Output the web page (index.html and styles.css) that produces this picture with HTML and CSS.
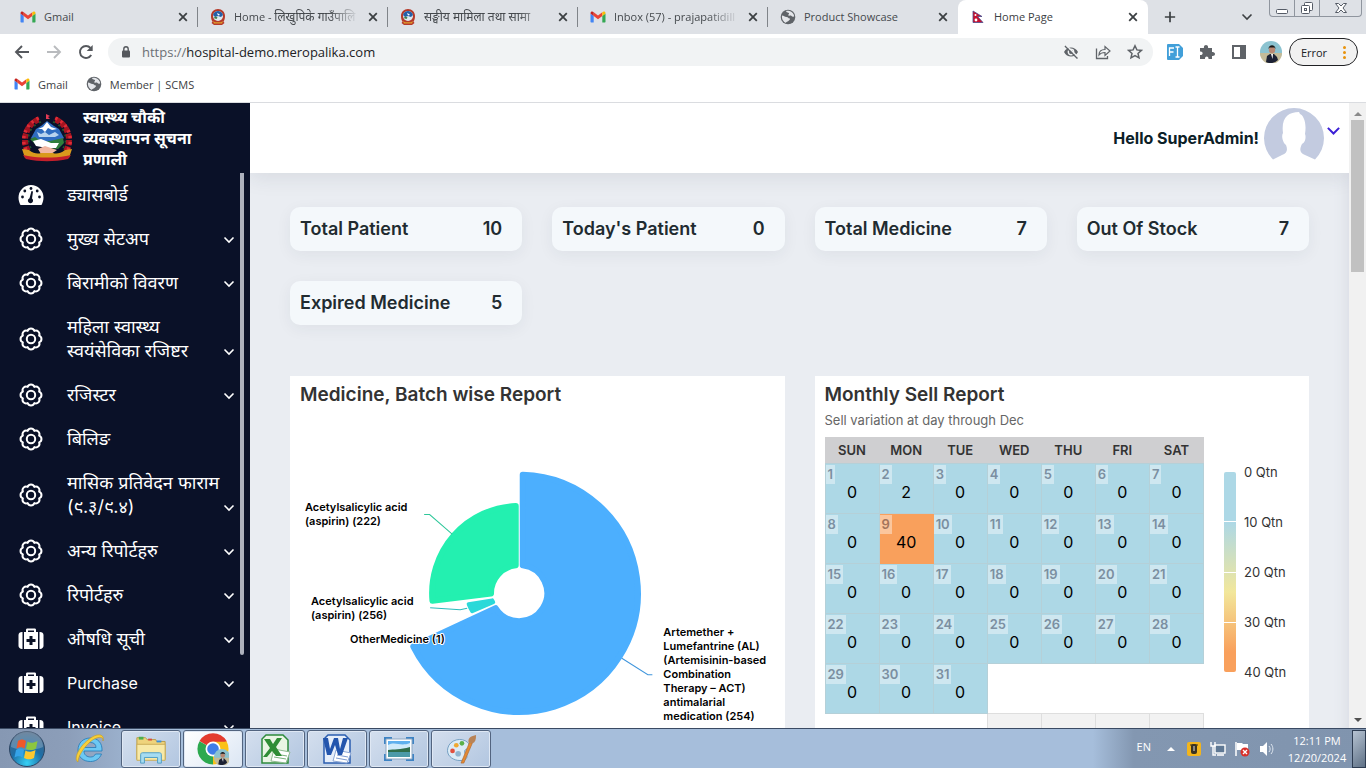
FILE: index.html
```html
<!DOCTYPE html>
<html lang="ne">
<head>
<meta charset="utf-8">
<title>Home Page</title>
<meta name="viewport" content="width=device-width, initial-scale=1">
<link rel="stylesheet" href="styles.css">
</head>
<body>
<svg class="sprite" aria-hidden="true">
  <symbol id="i-gmail" viewBox="0 0 16 16"><path fill="#4285f4" d="M1 13.500h2.700V7L0.500 4.500V13z"/><path fill="#34a853" d="M12.300 13.500H15l.5-.5V4.500L12.300 7z"/><path fill="#ea4335" d="M3.700 7V3.200L8 6.500l4.300-3.300V7L8 10.300z"/><path fill="#c5221f" d="M.5 4.500c0-2 1.800-2.500 3.200-1.300V7z"/><path fill="#fbbc04" d="M15.500 4.500c0-2-1.800-2.500-3.200-1.300V7z"/></symbol>
  <symbol id="i-globe" viewBox="0 0 16 16"><circle cx="8" cy="8" r="7.300" fill="#5f6368"/><path fill="#e4e6ea" d="M2 6.500c2 0 2.500 1.500 4.500 1.500S8 9.500 9.500 9.500 9 12 7.500 12.500 5.500 14 6 14C3.500 13 1.500 10 2 6.500zM6 2.200C7 4 8.500 3 9 4.200S7 6 8.500 6.500s2-.5 3 .5 1.500 1 2.700.2C14 5 12 2.500 9.500 2S6.500 2 6 2.200z"/></symbol>
  <symbol id="i-seal" viewBox="0 0 16 16"><path fill="#b53a2a" d="M8 0c4 0 7 3 7 7 0 3-.8 4.500-1.500 5.500l1 1.500L12 16H4l-2.500-2 1-1.500C1.800 11.500 1 10 1 7c0-4 3-7 7-7z"/><circle cx="8" cy="7" r="5" fill="#dfe9ee"/><path fill="#2560a8" d="M3 6c1-3 3-4 5-4s4 1 5 4l-2 2-3-1-3 1z"/><path fill="#fff" d="M7 4l2 1 1 1-2 .5z"/><path fill="#3f7f4a" d="M3.500 9l2-1.500 2 1-1 1.500z"/><path fill="#e0a02c" d="M3 12l2 1.200h6L13 12l-1 2.500H4z"/></symbol>
  <symbol id="i-emblem" viewBox="0 0 52 48">
    <path fill="none" stroke="#a31421" stroke-width="6" stroke-dasharray="5 1.500" d="M7 37C0 25 6 9 19 5M45 37C52 25 46 9 33 5"/>
    <path fill="none" stroke="#e02a35" stroke-width="3.500" stroke-dasharray="2.500 3.500" d="M5 36C-1 24 5 9 19 3.500M47 36C53 24 47 9 33 3.500"/>
    <path fill="none" stroke="#1e5b2c" stroke-width="1.500" stroke-dasharray="2 4" d="M10 34C4 24 9 12 20 8M42 34C48 24 43 12 32 8"/>
    <path fill="#2f6dc0" d="M10 24l5-9 5-3 6-5 7 5 5 3 5 9-6 5-22 1z"/>
    <path fill="#fff" d="M17 15l5-2 4-5 4 5 6 2-5 1-4-2-3 4-3-3z"/>
    <path fill="#b9d4ee" d="M16 18l4 2 4-2 4 3 6-3 4 3-4 2H18z"/>
    <path fill="#2f7d3b" d="M9 25l5-2 7 5 8-1 13-3 1 5-6 6-10-1-12-3z"/>
    <path fill="#fff" d="M12 27l8-2 10 4 8 0-3 5-9 0-11-2z"/>
    <path fill="#f1b7a2" d="M17 35l7-3 12 4-6 4H20z"/>
    <path fill="#d99a1c" d="M1 35l7 1c5 4 9 4 12 3h12c3 1 7 1 12-3l7-1-3 9c-12 3-32 3-44 0z"/>
    <path fill="#c4202b" d="M2 41l5 1c12 2 26 2 38 0l5-1-3 4c-14 3-28 3-42 0z"/>
    <path fill="#e33a55" d="M25 0l4 2-2 1 2 2h-4z"/>
  </symbol>
  <symbol id="i-x" viewBox="0 0 14 14"><path d="M3.200 3.200l7.600 7.600M10.800 3.200l-7.600 7.600" stroke="#3c4043" stroke-width="1.800" fill="none"/></symbol>
  <symbol id="i-cog" viewBox="0 0 24 24"><path d="M20.130 8.630A3.600 3.600 0 0 1 20.130 15.370A3.600 3.600 0 0 1 15.370 20.130A3.600 3.600 0 0 1 8.630 20.130A3.600 3.600 0 0 1 3.870 15.370A3.600 3.600 0 0 1 3.870 8.630A3.600 3.600 0 0 1 8.630 3.870A3.600 3.600 0 0 1 15.370 3.870A3.600 3.600 0 0 1 20.130 8.630Z" fill="none" stroke="#fff" stroke-width="2" stroke-linejoin="round"/><circle cx="12" cy="12" r="4.200" fill="none" stroke="#fff" stroke-width="2"/></symbol>
  <symbol id="i-kit" viewBox="0 0 26 22"><path fill="#fff" d="M4.500 4v17H4c-2 0-3.500-1.500-3.500-3V7c0-2 1.500-3 3.500-3zM21.500 4v17h.5c2 0 3.500-1.500 3.500-3V7c0-2-1.500-3-3.500-3zM6 4h2V2c0-1 .5-1.500 1.500-1.500h7C17.500.5 18 1 18 2v2h2v17H6zm4 0h6V2.500h-6z"/><path fill="#0b1226" d="M11.500 8h3v3h3v3h-3v3h-3v-3h-3v-3h3z"/></symbol>
  <symbol id="i-down" viewBox="0 0 12 8"><path d="M1.500 1.500L6 6l4.500-4.500" fill="none" stroke="currentColor" stroke-width="1.600"/></symbol>
  <symbol id="i-man" viewBox="0 0 22 22"><circle cx="11" cy="11" r="11" fill="#8cc3d0"/><path fill="#c4bb98" d="M0 12h22a11 11 0 0 1-22 0z"/><path fill="#1c2133" d="M6 21l1-6 3-2h4l3 3 1 3a11 11 0 0 1-12 2z"/><circle cx="12" cy="9" r="3.200" fill="#b98872"/><path fill="#1a1715" d="M8.500 8c0-5 7-5 7 0l-1-1.500h-5z"/><path fill="#fff" d="M11 13h2l-.5 5z"/></symbol>
</svg>

<div class="browser">
  <div class="tabstrip">
    <div class="tab"><svg class="fav"><use href="#i-gmail"/></svg><span class="tab-title">Gmail</span><button class="x" aria-label="Close tab"><svg><use href="#i-x"/></svg></button></div>
    <div class="tab"><svg class="fav"><use href="#i-seal"/></svg><span class="tab-title fade">Home - <span class="deva">लिखुपिके गाउँपालि</span></span><button class="x" aria-label="Close tab"><svg><use href="#i-x"/></svg></button></div>
    <div class="tab"><svg class="fav"><use href="#i-seal"/></svg><span class="tab-title fade"><span class="deva">सङ्घीय मामिला तथा सामा</span></span><button class="x" aria-label="Close tab"><svg><use href="#i-x"/></svg></button></div>
    <div class="tab"><svg class="fav"><use href="#i-gmail"/></svg><span class="tab-title fade">Inbox (57) - prajapatidill</span><button class="x" aria-label="Close tab"><svg><use href="#i-x"/></svg></button></div>
    <div class="tab before-active"><svg class="fav"><use href="#i-globe"/></svg><span class="tab-title">Product Showcase</span><button class="x" aria-label="Close tab"><svg><use href="#i-x"/></svg></button></div>
    <div class="tab active"><svg class="fav" viewBox="0 0 16 16"><path d="M3 2l9 5.500H7.500L13 13.500H3z" fill="#c8102e" stroke="#4a4a8c" stroke-width=".8"/><circle cx="5.500" cy="6" r="1" fill="#fff"/><circle cx="6" cy="11" r="1.400" fill="#fff"/></svg><span class="tab-title">Home Page</span><button class="x" aria-label="Close tab"><svg><use href="#i-x"/></svg></button></div>
    <button class="new-tab" aria-label="New tab"><svg viewBox="0 0 14 14"><path d="M7 1v12M1 7h12" stroke="#3c4043" stroke-width="2"/></svg></button>
    <button class="tab-search" aria-label="Search tabs"><svg viewBox="0 0 12 8"><use href="#i-down"/></svg></button>
    <div class="win-buttons">
      <button aria-label="Minimize"><svg viewBox="0 0 14 14"><rect x="1.500" y="8.500" width="11" height="4" rx="1" fill="#fff" stroke="#555b66"/></svg></button>
      <button aria-label="Restore"><svg viewBox="0 0 14 14"><rect x="4.500" y="1.500" width="8" height="8" rx="1" fill="#fff" stroke="#555b66"/><rect x="1.500" y="4.500" width="8" height="8" rx="1" fill="#fff" stroke="#555b66"/><rect x="4.500" y="7.500" width="2" height="2" fill="none" stroke="#555b66"/></svg></button>
      <button class="wide" aria-label="Close"><svg viewBox="0 0 14 14"><path d="M1.500 2.500h3L7 5l2.500-2.500h3L9 7l3.500 4.500h-3L7 9l-2.500 2.500h-3L5 7z" fill="#fff" stroke="#555b66"/></svg></button>
    </div>
  </div>

  <div class="toolbar">
    <button class="nav" aria-label="Back"><svg viewBox="0 0 16 16"><path d="M15 8H2M8 2L2 8l6 6" fill="none" stroke="#55585d" stroke-width="1.900"/></svg></button>
    <button class="nav" aria-label="Forward"><svg viewBox="0 0 16 16"><path d="M1 8h13M8 2l6 6-6 6" fill="none" stroke="#b9bbbe" stroke-width="1.900"/></svg></button>
    <button class="nav" aria-label="Reload"><svg viewBox="0 0 16 16"><path d="M13.200 11A6 6 0 1 1 12.500 4" fill="none" stroke="#55585d" stroke-width="1.900"/><path d="M14.700 1v6h-6z" fill="#55585d"/></svg></button>
    <div class="omnibox">
      <svg class="lock" viewBox="0 0 10 14"><rect x="1" y="5.500" width="8" height="7" rx="1" fill="#55585d"/><path d="M2.800 6V4a2.200 2.200 0 0 1 4.400 0v2" fill="none" stroke="#55585d" stroke-width="1.400"/></svg>
      <a class="url" href="#"><span>https://</span>hospital-demo.meropalika.com</a>
      <div class="omni-icons">
        <svg viewBox="0 0 16 16"><path d="M1 8c3-6 11-6 14 0-3 6-11 6-14 0z" fill="#5f6368"/><circle cx="8" cy="8" r="2.700" fill="#5f6368" stroke="#f1f3f4" stroke-width="1.400"/><path d="M2 2l12.500 12.500" stroke="#5f6368" stroke-width="1.600"/><path d="M3.500 1.500L15 13" stroke="#f1f3f4" stroke-width="1.200"/></svg>
        <svg viewBox="0 0 16 16"><path d="M1.500 4.500v10h11V12" fill="none" stroke="#5f6368" stroke-width="1.300"/><path d="M4 11c0-4 2.500-5.500 6-5.500V2.500l5 4.500-5 4.500V8.500C7.500 8.500 5.500 9 4 11z" fill="none" stroke="#5f6368" stroke-width="1.200"/></svg>
        <svg viewBox="0 0 16 16"><path d="M8 1.800l1.900 4.100 4.500.5-3.400 3 1 4.400L8 11.500l-4 2.300 1-4.400-3.400-3 4.500-.5z" fill="none" stroke="#5f6368" stroke-width="1.500"/></svg>
      </div>
    </div>
    <div class="extensions">
      <svg viewBox="0 0 16 16"><path d="M1 0h11l4 4v8l-4 4H1a1 1 0 0 1-1-1V1a1 1 0 0 1 1-1z" fill="#419fd9"/><path d="M2.500 12V4H7M2.500 8h4M8.500 3h4M8.500 13h4M10.500 3v10" stroke="#fff" stroke-width="1.300" fill="none"/></svg>
      <svg viewBox="0 0 16 16"><path d="M1 4h4c-1-4 5-4 4 0h4v4c4-.5 4 4.500 0 4v3H9.500c.5-3.500-4-3.500-3.500 0H1v-4c3.500.5 3.500-4 0-3.500z" fill="#5f6368"/></svg>
      <svg viewBox="0 0 16 16"><path fill-rule="evenodd" d="M1 1h14v14H1zM3 3v10h6V3z" fill="#5f6368"/></svg>
      <svg class="profile"><use href="#i-man"/></svg>
    </div>
    <button class="error-pill">Error<span class="dots"><i></i><i></i><i></i></span></button>
  </div>

  <div class="bookmarks">
    <a href="#"><svg><use href="#i-gmail"/></svg>Gmail</a>
    <a href="#"><svg><use href="#i-globe"/></svg>Member | SCMS</a>
  </div>

  <div class="page">
    <aside class="sidebar">
      <div class="brand"><svg class="logo"><use href="#i-emblem"/></svg><strong>स्वास्थ्य चौकी<br>व्यवस्थापन सूचना<br>प्रणाली</strong></div>
      <nav class="menu">
        <a href="#"><svg class="mi" viewBox="0 0 26 22"><path fill="#fff" d="M13 1a12.500 12.500 0 0 1 12.500 12.500c0 2.700-.7 5-2 7.500h-21C1.200 18.500.5 16.200.5 13.500A12.500 12.500 0 0 1 13 1z"/><g fill="#0b1226"><circle cx="13" cy="4.500" r="1.400"/><circle cx="6.800" cy="7" r="1.400"/><circle cx="19.200" cy="7" r="1.400"/><circle cx="4.500" cy="13" r="1.400"/><circle cx="21.500" cy="13" r="1.400"/><path d="M13.500 7l1.500.5-1 7a2.600 2.600 0 1 1-2.500-.3z"/></g></svg><span class="ne">ड्यासबोर्ड</span></a>
        <a href="#"><svg class="mi"><use href="#i-cog"/></svg><span class="ne">मुख्य सेटअप</span><svg class="chev"><use href="#i-down"/></svg></a>
        <a href="#"><svg class="mi"><use href="#i-cog"/></svg><span class="ne">बिरामीको विवरण</span><svg class="chev"><use href="#i-down"/></svg></a>
        <a href="#"><svg class="mi"><use href="#i-cog"/></svg><span class="ne">महिला स्वास्थ्य<br>स्वयंसेविका रजिष्टर</span><svg class="chev"><use href="#i-down"/></svg></a>
        <a href="#"><svg class="mi"><use href="#i-cog"/></svg><span class="ne">रजिस्टर</span><svg class="chev"><use href="#i-down"/></svg></a>
        <a href="#"><svg class="mi"><use href="#i-cog"/></svg><span class="ne">बिलिङ</span></a>
        <a href="#"><svg class="mi"><use href="#i-cog"/></svg><span class="ne">मासिक प्रतिवेदन फाराम<br>(९.३/९.४)</span><svg class="chev"><use href="#i-down"/></svg></a>
        <a href="#"><svg class="mi"><use href="#i-cog"/></svg><span class="ne">अन्य रिपोर्टहरु</span><svg class="chev"><use href="#i-down"/></svg></a>
        <a href="#"><svg class="mi"><use href="#i-cog"/></svg><span class="ne">रिपोर्टहरु</span><svg class="chev"><use href="#i-down"/></svg></a>
        <a href="#"><svg class="mi"><use href="#i-kit"/></svg><span class="ne">औषधि सूची</span><svg class="chev"><use href="#i-down"/></svg></a>
        <a href="#"><svg class="mi"><use href="#i-kit"/></svg><span>Purchase</span><svg class="chev"><use href="#i-down"/></svg></a>
        <a href="#"><svg class="mi"><use href="#i-kit"/></svg><span>Invoice</span><svg class="chev"><use href="#i-down"/></svg></a>
        <i class="menu-thumb"></i>
      </nav>
    </aside>

    <main class="main">
      <header class="topbar">
        <b>Hello SuperAdmin!</b>
        <svg class="avatar" viewBox="0 0 60 60"><path d="M9 51.500A30 30 0 1 1 51 51.500L41 47c-5-2-6-5-3-11 4-2 4-8 3-10 2-12-2-19-5-20l-1-2C24 4 17 10 19 25c-2 3 0 10 3 12 2 5 1 8-4 10z" fill="#c3cbe0"/></svg>
        <button class="user-menu" aria-label="User menu"><svg><use href="#i-down"/></svg></button>
      </header>
      <div class="content">
        <section class="stats">
          <div class="stat"><span>Total Patient</span><span>10</span></div>
          <div class="stat"><span>Today's Patient</span><span>0</span></div>
          <div class="stat"><span>Total Medicine</span><span>7</span></div>
          <div class="stat"><span>Out Of Stock</span><span>7</span></div>
          <div class="stat"><span>Expired Medicine</span><span>5</span></div>
        </section>
        <section class="charts">
          <article class="panel">
            <h2>Medicine, Batch wise Report</h2>
            <svg class="pie" viewBox="0 0 494 330" role="img" aria-label="Medicine, Batch wise Report">
              <g stroke-width="6" stroke-linejoin="round">
                <path d="M232.500 58.600A118.500 118.500 0 1 1 123.200 230.300L205.300 192A28 28 0 1 0 232.500 149.200Z" fill="#4caffe" stroke="#4caffe"/>
                <path d="M142.300 184.600A87 87 0 0 1 225.500 90V149.200A28 28 0 0 0 200.800 177.400Z" fill="#23f0b0" stroke="#23f0b0"/>
                <path d="M178.500 188L202 184.200L203 186L182 195A53 53 0 0 1 178.500 188Z" fill="#2bd9d9" stroke="#2bd9d9" stroke-width="4"/>
              </g>
              <path d="M134 98.500h5.500L162 118" class="lead" stroke="#2fc79a"/>
              <path d="M140 191.500L170 193.500 177 192" class="lead" stroke="#2bbcbc"/>
              <path d="M331.500 242L357.500 258.500H362" class="lead" stroke="#3f95dc"/>
              <g class="pie-label">
                <text x="15" y="95">Acetylsalicylic acid</text><text x="15" y="109">(aspirin) (222)</text>
                <text x="21" y="189">Acetylsalicylic acid</text><text x="21" y="203">(aspirin) (256)</text>
                <text x="60" y="227">OtherMedicine (1)</text>
                <text x="373" y="220">Artemether +</text><text x="373" y="234">Lumefantrine (AL)</text><text x="373" y="248">(Artemisinin-based</text><text x="373" y="262">Combination</text><text x="373" y="276">Therapy – ACT)</text><text x="373" y="290">antimalarial</text><text x="373" y="304">medication (254)</text>
              </g>
            </svg>
          </article>
          <article class="panel">
            <h2>Monthly Sell Report</h2>
            <p>Sell variation at day through Dec</p>
            <div class="heat">
              <div class="calendar"><table>
                <thead><tr><th>SUN</th><th>MON</th><th>TUE</th><th>WED</th><th>THU</th><th>FRI</th><th>SAT</th></tr></thead>
                <tbody>
                  <tr><td><b>1</b>0</td><td><b>2</b>2</td><td><b>3</b>0</td><td><b>4</b>0</td><td><b>5</b>0</td><td><b>6</b>0</td><td><b>7</b>0</td></tr>
                  <tr><td><b>8</b>0</td><td class="hot"><b>9</b>40</td><td><b>10</b>0</td><td><b>11</b>0</td><td><b>12</b>0</td><td><b>13</b>0</td><td><b>14</b>0</td></tr>
                  <tr><td><b>15</b>0</td><td><b>16</b>0</td><td><b>17</b>0</td><td><b>18</b>0</td><td><b>19</b>0</td><td><b>20</b>0</td><td><b>21</b>0</td></tr>
                  <tr><td><b>22</b>0</td><td><b>23</b>0</td><td><b>24</b>0</td><td><b>25</b>0</td><td><b>26</b>0</td><td><b>27</b>0</td><td><b>28</b>0</td></tr>
                  <tr><td><b>29</b>0</td><td><b>30</b>0</td><td><b>31</b>0</td><td class="none"></td><td class="none"></td><td class="none"></td><td class="none"></td></tr>
                  <tr><td class="none"></td><td class="none"></td><td class="none"></td><td class="next"></td><td class="next"></td><td class="next"></td><td class="next"></td></tr>
                </tbody>
              </table></div>
              <div class="legend"><div class="scale"><i></i><i></i><i></i><i></i></div><div class="ticks"><span>0 Qtn</span><span>10 Qtn</span><span>20 Qtn</span><span>30 Qtn</span><span>40 Qtn</span></div></div>
            </div>
          </article>
        </section>
      </div>
    </main>

    <div class="scrollbar"><svg viewBox="0 0 8 4"><path d="M0 4l4-4 4 4z" fill="#8a8a8a"/></svg><i></i><svg viewBox="0 0 8 4"><path d="M0 0l4 4 4-4z" fill="#505050"/></svg></div>
  </div>

  <footer class="taskbar">
    <button class="orb" aria-label="Start"><svg viewBox="0 0 38 38"><defs><radialGradient id="orb" cx=".5" cy=".9" r=".9"><stop offset="0" stop-color="#35d0f5"/><stop offset=".5" stop-color="#1d6ea6"/><stop offset="1" stop-color="#4a6684"/></radialGradient></defs><circle cx="19" cy="19" r="17.500" fill="url(#orb)" stroke="#2c4563"/><path d="M3 17a16 16 0 0 1 32 0c-8 4-24 4-32 0z" fill="#fff" opacity=".22"/><path d="M10 11c3-2 5-2 8 0l-1.500 7.500c-3-2-5-1.500-8 0z" fill="#f0582a"/><path d="M19.500 11.500c3 2 6 1.500 10-.5L28 18.500c-3 2-7 2-10 .5z" fill="#8cc63f"/><path d="M8 20c3-2 5-2 8 0l-1.500 7.500c-3-2-5-1.500-8 0z" fill="#35a3e8"/><path d="M17.500 20.500c3 2 6 1.500 10-.5L26 28c-3 2-7 1.500-10 0z" fill="#fdc82f"/></svg></button>
    <button class="ie" aria-label="Internet Explorer"><svg viewBox="0 0 32 32"><path d="M28 18H10c0 4 3 6 6.500 6 2.500 0 4-1 5-3h6c-2 5-6 7.500-11 7.500C9 28.500 4 24 4 17S9 5 16.500 5 28.500 10 28 18zM10.500 14.500H22c0-3-2-5-5.500-5s-6 2-6 5z" fill="#6cc8f3" stroke="#2379b5" stroke-width=".8"/><path d="M4 29c-5-3 1-15 10-22C22 0 31 0 29 8c1-5-6-5-13 1S4 24 4 29z" fill="#f7cf3a" stroke="#c79a1c" stroke-width=".6"/></svg></button>
    <button class="task" aria-label="File Explorer"><svg viewBox="0 0 34 32"><path d="M2 4h9l2 2h9l1 2h9v19H2z" fill="#efd37c" stroke="#b89b45"/><path d="M2 11h30v17H2z" fill="#f8e9a7" stroke="#c9ab55"/><path d="M4 3h5v3H4z" fill="#4cae4c"/><path d="M14 5h4v2h-4z" fill="#d94b3a"/><path d="M23 7h5v2h-5z" fill="#3b8fd6"/><path d="M6 31V22c0-1.500 1-2 2-2h18c1 0 2 .5 2 2v9h-4v-6H10v6z" fill="#a6dcf2" stroke="#4c9cc4"/></svg></button>
    <button class="task current" aria-label="Chrome"><svg viewBox="0 0 32 32"><path d="M16 16L2.500 8A15.600 15.600 0 0 1 29.500 8z" fill="#e33b2e"/><path d="M16 16L29.500 8.200A15.600 15.600 0 0 1 16 31.600z" fill="#fbc116"/><path d="M16 16v15.600A15.600 15.600 0 0 1 2.500 8.200z" fill="#2da94f"/><path d="M16 8.500h13.700L22 20z" fill="#fbc116"/><path d="M16 8.500h13.700L27 5 16 4z" fill="#e33b2e"/><circle cx="16" cy="16" r="7.500" fill="#fff"/><circle cx="16" cy="16" r="5.800" fill="#3f7ee8"/><use href="#i-man" x="17" y="16" width="16" height="16"/></svg></button>
    <button class="task" aria-label="Excel"><svg viewBox="0 0 32 32"><path d="M7 2h17l5 5v23H3V6z" fill="#e9f5e4" stroke="#2e8b3d" stroke-width="1.500"/><path d="M15 16l16 3-4 11-15-2z" fill="#fff" stroke="#8db98f"/><path d="M16 21l12 2M15 24l12 2" stroke="#79b07c"/><path d="M5 6h6l3 5 4-6h5l-6 9 6 9h-6l-4-5-5 6H4l7-9z" fill="#2f8d35"/></svg></button>
    <button class="task" aria-label="Word"><svg viewBox="0 0 32 32"><path d="M7 2h17l5 5v23H3V6z" fill="#e6eefa" stroke="#2b5eb0" stroke-width="1.500"/><path d="M15 17l15 3-4 10-14-2z" fill="#fff" stroke="#8ba6d4"/><path d="M16 22l11 2M15 25l11 2" stroke="#7d9bd0"/><path d="M2 5h5l2 11 4-11h4l2 11 3-11h5l-6 17h-4l-3-10-4 10H6z" fill="#2355ad"/></svg></button>
    <button class="task" aria-label="Photo Viewer"><svg viewBox="0 0 32 30"><path d="M1 3h8v7H1zM23 3h8v7h-8zM1 20h8v7H1zM23 20h8v7h-8z" fill="#3d83c4"/><path d="M3 5h26v20H3z" fill="#fff" stroke="#8fa8c2"/><path d="M5 7h22v16H5z" fill="#5fb0ee"/><path d="M5 11c8-4 12 2 22-2v7H5z" fill="#cfeafa"/><path d="M5 16c6-1 12 0 22-3v5H5z" fill="#2f6d4a"/><path d="M5 18h22v5H5z" fill="#4c9aa8"/></svg></button>
    <button class="task" aria-label="Paint"><svg viewBox="0 0 34 32"><path d="M3 15C5 6 18 3 24 9c3 3 2 6-1 7s-3 4 0 7c2 4-5 6-10 5S1 23 3 15z" fill="#dcebf6" stroke="#6f9cc0"/><circle cx="8" cy="18" r="2.500" fill="#e2503f"/><circle cx="12" cy="12" r="2.500" fill="#f0a830"/><circle cx="18" cy="10" r="2.500" fill="#5ab04a"/><circle cx="14" cy="21" r="3" fill="#8fb4cf"/><path d="M26 9l3 1-9 21-3 0z" fill="#e28a35" stroke="#a95f22" stroke-width=".6"/><path d="M25 9c-1-5 3-7 8-8 0 5-1 8-4 9z" fill="#b98356"/></svg></button>
    <div class="tray">
      <span class="lang">EN</span>
      <svg viewBox="0 0 14 14"><path d="M3 9l4-4 4 4z" fill="#fff"/></svg>
      <svg class="t16" viewBox="0 0 16 16"><rect x="1" y="1" width="14" height="14" rx="2" fill="#f3b51c"/><rect x="5" y="3" width="6" height="10" rx="2" fill="#3a3322"/><path d="M8 5v5" stroke="#ddd"/><path d="M4 4h8" stroke="#3a3322"/></svg>
      <svg class="t16" viewBox="0 0 16 16"><rect x="5" y="4" width="10" height="8" fill="#5f7894" stroke="#fff" stroke-width="1.400"/><path d="M7 14h7M1 1v4h4V1M3 5v9h3" fill="none" stroke="#fff" stroke-width="1.400"/></svg>
      <svg class="t16" viewBox="0 0 16 16"><path d="M2 1v14" stroke="#fff" stroke-width="1.500"/><path d="M3 2h5l1 1h5v7H8L7 9H3z" fill="#fff"/><circle cx="11" cy="11" r="4.500" fill="#d8302a"/><path d="M9 9l4 4M13 9l-4 4" stroke="#fff" stroke-width="1.400"/></svg>
      <svg class="t16" viewBox="0 0 16 16"><path d="M2 5h3l4-4v14l-4-4H2z" fill="#fff"/><path d="M11 5c1.500 2 1.500 4 0 6M13 3c2.500 3 2.500 7 0 10" fill="none" stroke="#dfe7f0"/></svg>
      <time>12:11 PM<br>12/20/2024</time>
    </div>
    <button class="show-desktop" aria-label="Show desktop"></button>
  </footer>
</div>
</body>
</html>
```
FILE: styles.css
```css
* { box-sizing: border-box; }
body { margin: 0; font-family: Inter, "Noto Sans", "Liberation Sans", sans-serif; color: #212529; }
button { border: 0; padding: 0; margin: 0; background: none; font: inherit; color: inherit; display: flex; align-items: center; justify-content: center; }
a { color: inherit; text-decoration: none; }
svg { display: block; flex: none; }
.sprite { position: absolute; width: 0; height: 0; }
.browser { display: flex; flex-direction: column; height: 100vh; overflow: hidden; }

.tabstrip, .toolbar, .bookmarks, .taskbar { flex: none; font-family: "Open Sans", "Noto Sans", sans-serif; }

/* tabs */
.tabstrip { display: flex; height: 34px; padding-left: 8px; background: #dee1e6; font-size: 11px; color: #45494d; }
.tab { display: flex; align-items: center; flex: 0 1 190px; min-width: 0; padding: 0 8px 0 12px; position: relative; }
.tab::after { content: ""; position: absolute; right: 0; top: 7px; height: 20px; width: 1px; background: #808489; }
.tab.before-active::after, .tab.active::after { display: none; }
.tab.active { background: #fff; border-radius: 8px 8px 0 0; color: #3c4043; }
.fav { width: 16px; height: 16px; margin-right: 8px; }
.tab-title { flex: 1; min-width: 0; overflow: hidden; white-space: nowrap; line-height: 20px; margin-right: 7px; }
.tab-title.fade { mask-image: linear-gradient(90deg, #000 75%, transparent); }
.deva { font-size: 12px; }
.x, .x svg { width: 14px; height: 14px; }
.new-tab { width: 44px; height: 34px; }
.new-tab svg { width: 12px; height: 12px; }
.tab-search { margin-left: auto; width: 44px; color: #3c4043; }
.tab-search svg { width: 12px; height: 8px; }
.win-buttons { display: flex; width: 93px; height: 17px; margin-right: 4px; border: 1px solid #8f959e; border-top: 0; border-radius: 0 0 4px 4px; }
.win-buttons button { width: 25px; border-right: 1px solid #8f959e; }
.win-buttons .wide { flex: 1; border-right: 0; }
.win-buttons svg { width: 14px; height: 14px; }

/* address bar */
.toolbar { display: flex; align-items: center; height: 36px; padding: 0 8px 0 14px; background: #fff; }
.nav { width: 16px; height: 16px; margin-right: 16px; }
.nav svg { width: 16px; height: 16px; }
.omnibox { flex: 1; display: flex; align-items: center; height: 28px; margin-right: 14px; padding: 0 10px 0 13px; background: #f1f3f4; border-radius: 14px; margin-left: -2px; }
.lock { width: 10px; height: 14px; margin-right: 11px; }
.url { flex: 1; font-size: 13px; color: #202124; }
.url span { color: #6c7075; }
.omni-icons, .extensions { display: flex; align-items: center; gap: 16px; }
.omni-icons svg, .extensions svg { width: 16px; height: 16px; }
.extensions { gap: 16px; margin-right: 7px; }
.extensions .profile { width: 22px; height: 22px; margin-left: -3px; }
.error-pill { width: 69px; height: 28px; gap: 16px; border: 1px solid #202124; border-radius: 14px; background: #f1f1f1; font-size: 11px; color: #202124; }
.dots { display: flex; flex-direction: column; gap: 2px; }
.dots i { width: 3px; height: 3px; border-radius: 50%; background: #e8930c; }

.bookmarks { display: flex; gap: 18px; height: 33px; padding: 0 14px 4px; align-items: center; border-bottom: 1px solid #dadce0; background: #fff; font-size: 11px; color: #3c4043; }
.bookmarks a { display: flex; align-items: center; gap: 8px; }
.bookmarks svg { width: 16px; height: 16px; }

/* page */
.page { flex: 1; min-height: 0; display: flex; overflow: hidden; }
.sidebar { flex: none; width: 250px; background: #0a1128; color: #fff; overflow: hidden; }
.brand { display: flex; align-items: center; height: 70px; padding-left: 21px; gap: 10px; font-size: 16px; line-height: 21px; white-space: nowrap; }
.logo { width: 52px; height: 48px; }
.menu { position: relative; }
.menu a { display: flex; align-items: center; padding: 10px 15px 10px 18px; font-size: 16px; line-height: 24px; }
.mi { width: 26px; height: 24px; margin-right: 23px; }
.menu span { flex: 1; min-width: 0; white-space: nowrap; }
.menu .ne { font-size: 18px; }
.chev { width: 12px; height: 8px; align-self: flex-end; margin-bottom: 7px; }
.menu-thumb { position: absolute; right: 6px; top: 0; width: 4px; height: 482px; border-radius: 0 0 2px 2px; background: #adb1bd; }

.main { flex: 1; min-width: 0; overflow: hidden; background: #eaedf2; box-shadow: inset -12px 0 12px -8px #dcdfe6; }
.topbar { display: flex; align-items: center; justify-content: flex-end; height: 70px; padding-right: 8px; background: #fff; box-shadow: 0 4px 20px rgba(40, 50, 70, .1); font-size: 16px; color: #0b2027; }
.avatar { width: 60px; height: 60px; margin-left: 5px; }
.user-menu { margin: 0 0 14px 2px; color: #3b1fd6; }
.user-menu svg { width: 15px; height: 10px; }
.content { padding: 34px 40px; }
.stats { display: grid; grid-template-columns: repeat(4, 1fr); gap: 30px; }
.stat { display: flex; align-items: center; justify-content: space-between; height: 44px; padding: 0 20px 0 10px; background: #f4f8fb; border-radius: 10px; box-shadow: 0 4px 16px rgba(40, 50, 70, .06); font-size: 18px; line-height: 24px; font-weight: 600; color: #212b30; }
.charts { display: grid; grid-template-columns: 1fr 1fr; gap: 30px; margin-top: 51px; }
.panel { background: #fff; min-width: 0; min-height: 400px; }
.panel h2 { margin: 0; padding: 5px 10px 0; font-size: 19px; line-height: 28px; font-weight: 600; color: #333; }
.panel p { margin: 0; padding: 0 10px; font-size: 13px; line-height: 22px; color: #666; }
.pie { width: 100%; margin-top: 7px; }
.lead { fill: none; stroke-width: 1; }
.pie-label { font-size: 11px; font-weight: 600; fill: #000; stroke: #fff; stroke-width: 2px; paint-order: stroke; stroke-linejoin: round; }

.heat { display: flex; gap: 20px; padding: 6px 10px 0; }
.calendar { flex: 1; min-width: 0; }
.heat table { width: 100%; table-layout: fixed; border-collapse: collapse; }
.heat th { height: 26px; padding: 0; background: #cfcfd1; font-size: 13px; font-weight: 600; color: #333; }
.heat td { position: relative; height: 50px; padding: 7px 0 0; border: 1px solid #b5d0d8; background: #add8e6; font-size: 16px; line-height: 20px; text-align: center; color: #000; }
.heat td b { position: absolute; left: 0; top: 1px; padding: 0 2px; font-size: 13px; line-height: 19px; font-weight: 600; color: #7b8fa1; background: rgba(255, 255, 255, .4); }
.heat td.hot { background: #f9a05c; border-color: #f9a05c; }
.heat td.hot b { color: #a3745b; }
.heat td.none { background: #fff; border: 0; }
.heat td.next { background: #f2f2f2; border-color: #dedede; }
.legend { display: flex; gap: 8px; width: 75px; padding-top: 35px; }
.scale { width: 12px; height: 200px; border-radius: 2px; display: flex; flex-direction: column; background: linear-gradient(#add8e6 25%, #f2e79b 60%, #f9a05c 90%); }
.scale i { flex: 1; border-bottom: 1px solid #fff; }
.scale i:last-child { border: 0; }
.ticks { display: flex; flex-direction: column; justify-content: space-between; height: 220px; margin-top: -10px; font-size: 13px; line-height: 20px; color: #333; white-space: nowrap; }

.scrollbar { flex: none; width: 17px; display: flex; flex-direction: column; align-items: center; padding: 9px 0 6px; background: #f1f1f1; }
.scrollbar svg { width: 8px; height: 4px; }
.scrollbar i { width: 13px; height: 152px; margin: 4px 0 auto; background: #c1c1c1; }

/* taskbar */
.taskbar { display: flex; align-items: center; height: 40px; border-top: 1px solid #3a4a63; background: linear-gradient(90deg, #8698b3 0, #8c9eb9 5%, #a6bedb 12%, #a6bedb 80%, #8397b1 83%, #8094ae 100%); }
.orb { width: 54px; }
.orb svg { width: 38px; height: 38px; }
.ie { width: 67px; }
.ie svg { width: 32px; height: 32px; margin-left: 4px; }
.task { width: 60px; height: 38px; margin-right: 2px; border: 1px solid #52647f; border-radius: 3px; background: linear-gradient(135deg, #d4dfee, #b2c6e0); box-shadow: inset 0 0 0 1px #dfe8f4; }
.task.current { background: linear-gradient(135deg, #fff, #dbe6f4); }
.task svg { width: 32px; height: 32px; }
.tray { display: flex; align-items: center; margin-left: auto; color: #fff; font-size: 11px; gap: 8px; }
.tray svg { width: 14px; height: 14px; }
.tray .t16 { width: 16px; height: 16px; }
.lang { margin: 0 5px 4px 0; }
.tray time { width: 60px; line-height: 17px; text-align: center; margin: 0 5px; }
.show-desktop { width: 14px; height: 38px; border: 1px solid #2e3d52; background: linear-gradient(135deg, #b6c3d2, #5f7186); }
```
